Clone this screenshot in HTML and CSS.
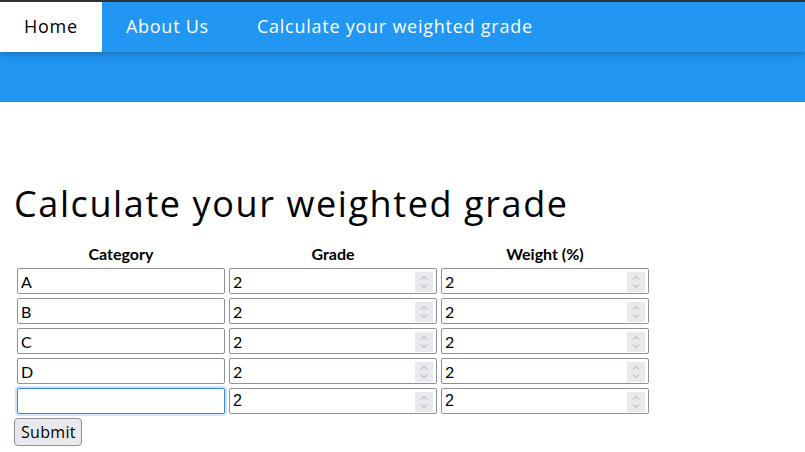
FILE: index.html
```html
<!DOCTYPE html>
<html lang="en">
<head>
<meta charset="utf-8">
<title>Weighted grade calculator</title>
<link rel="stylesheet" href="styles.css">
</head>
<body>
<div class="topline"></div>
<nav class="bar">
  <a class="bar-item active" href="#">Home</a>
  <a class="bar-item" href="#">About Us</a>
  <a class="bar-item" href="#">Calculate your weighted grade</a>
</nav>
<div class="band"></div>
<main class="content">
  <h1 class="title">Calculate your weighted grade</h1>
  <form class="grade-form">
    <table class="grade-table">
      <thead>
        <tr><th>Category</th><th>Grade</th><th>Weight (%)</th></tr>
      </thead>
      <tbody>
        <tr>
          <td><input class="field" type="text" value="A"></td>
          <td><span class="num"><input class="field" type="number" value="2"><span class="spin"><svg width="18" height="20" viewBox="0 0 18 20"><rect width="18" height="20" fill="#e9e9ed"/><path d="M6 7.5L9 4.5L12 7.5M6 12.5L9 15.5L12 12.5" fill="none" stroke="#a4a4ad" stroke-width="1"/></svg></span></span></td>
          <td><span class="num"><input class="field" type="number" value="2"><span class="spin"><svg width="18" height="20" viewBox="0 0 18 20"><rect width="18" height="20" fill="#e9e9ed"/><path d="M6 7.5L9 4.5L12 7.5M6 12.5L9 15.5L12 12.5" fill="none" stroke="#a4a4ad" stroke-width="1"/></svg></span></span></td>
        </tr>
        <tr>
          <td><input class="field" type="text" value="B"></td>
          <td><span class="num"><input class="field" type="number" value="2"><span class="spin"><svg width="18" height="20" viewBox="0 0 18 20"><rect width="18" height="20" fill="#e9e9ed"/><path d="M6 7.5L9 4.5L12 7.5M6 12.5L9 15.5L12 12.5" fill="none" stroke="#a4a4ad" stroke-width="1"/></svg></span></span></td>
          <td><span class="num"><input class="field" type="number" value="2"><span class="spin"><svg width="18" height="20" viewBox="0 0 18 20"><rect width="18" height="20" fill="#e9e9ed"/><path d="M6 7.5L9 4.5L12 7.5M6 12.5L9 15.5L12 12.5" fill="none" stroke="#a4a4ad" stroke-width="1"/></svg></span></span></td>
        </tr>
        <tr>
          <td><input class="field" type="text" value="C"></td>
          <td><span class="num"><input class="field" type="number" value="2"><span class="spin"><svg width="18" height="20" viewBox="0 0 18 20"><rect width="18" height="20" fill="#e9e9ed"/><path d="M6 7.5L9 4.5L12 7.5M6 12.5L9 15.5L12 12.5" fill="none" stroke="#a4a4ad" stroke-width="1"/></svg></span></span></td>
          <td><span class="num"><input class="field" type="number" value="2"><span class="spin"><svg width="18" height="20" viewBox="0 0 18 20"><rect width="18" height="20" fill="#e9e9ed"/><path d="M6 7.5L9 4.5L12 7.5M6 12.5L9 15.5L12 12.5" fill="none" stroke="#a4a4ad" stroke-width="1"/></svg></span></span></td>
        </tr>
        <tr>
          <td><input class="field" type="text" value="D"></td>
          <td><span class="num"><input class="field" type="number" value="2"><span class="spin"><svg width="18" height="20" viewBox="0 0 18 20"><rect width="18" height="20" fill="#e9e9ed"/><path d="M6 7.5L9 4.5L12 7.5M6 12.5L9 15.5L12 12.5" fill="none" stroke="#a4a4ad" stroke-width="1"/></svg></span></span></td>
          <td><span class="num"><input class="field" type="number" value="2"><span class="spin"><svg width="18" height="20" viewBox="0 0 18 20"><rect width="18" height="20" fill="#e9e9ed"/><path d="M6 7.5L9 4.5L12 7.5M6 12.5L9 15.5L12 12.5" fill="none" stroke="#a4a4ad" stroke-width="1"/></svg></span></span></td>
        </tr>
        <tr>
          <td><input class="field focused" type="text" value="" autofocus></td>
          <td><span class="num"><input class="field plain" type="number" value="2"><span class="spin"><svg width="18" height="20" viewBox="0 0 18 20"><rect width="18" height="20" fill="#e9e9ed"/><path d="M6 7.5L9 4.5L12 7.5M6 12.5L9 15.5L12 12.5" fill="none" stroke="#a4a4ad" stroke-width="1"/></svg></span></span></td>
          <td><span class="num"><input class="field plain" type="number" value="2"><span class="spin"><svg width="18" height="20" viewBox="0 0 18 20"><rect width="18" height="20" fill="#e9e9ed"/><path d="M6 7.5L9 4.5L12 7.5M6 12.5L9 15.5L12 12.5" fill="none" stroke="#a4a4ad" stroke-width="1"/></svg></span></span></td>
        </tr>
      </tbody>
    </table>
    <button class="submit" type="button">Submit</button>
  </form>
</main>
</body>
</html>
```
FILE: styles.css
```css
html, body {
  margin: 0;
  padding: 0;
  background: #fff;
  color: #000;
  font-family: "Open Sans", sans-serif;
}

.topline {
  height: 2px;
  background: #34343a;
}

.bar {
  display: flex;
  background: #2196f3;
  position: relative;
  z-index: 1;
  box-shadow: 0 2px 5px 0 rgba(0,0,0,0.16), 0 2px 10px 0 rgba(0,0,0,0.12);
}

.bar-item {
  display: block;
  padding: 11px 24px 12px;
  font-family: "Open Sans", sans-serif;
  font-size: 18px;
  line-height: 27px;
  letter-spacing: 0.75px;
  color: #fff;
  text-decoration: none;
  white-space: nowrap;
}

.bar-item.active {
  background: #fff;
  color: #000;
}

.band {
  height: 50px;
  background: #2196f3;
}

.content {
  padding: 65px 14px 0;
}

.title {
  margin: 10px 0 11px 0;
  font-family: "Open Sans", sans-serif;
  font-weight: 400;
  font-size: 36px;
  line-height: 54px;
  letter-spacing: 1.6px;
}

.grade-form {
  margin: 0;
}

.grade-table {
  border-collapse: separate;
  border-spacing: 2px;
}

.grade-table th {
  padding: 0 1px 2px;
  font-family: Lato, sans-serif;
  font-weight: 700;
  font-size: 16px;
  line-height: 19px;
  text-align: center;
}

.grade-table td {
  padding: 1px;
}

.num {
  display: block;
  position: relative;
}

.spin {
  position: absolute;
  top: 4px;
  right: 4px;
  display: block;
  width: 18px;
  height: 20px;
  pointer-events: none;
}

.spin svg {
  display: block;
}

.field {
  display: block;
  box-sizing: border-box;
  width: 208px;
  height: 26px;
  margin: 0;
  padding: 1px 3px;
  border: 1px solid #8f8f9d;
  border-radius: 2px;
  font-family: Lato, sans-serif;
  font-size: 16px;
  color: #000;
  background: #fff;
  outline: none;
  -moz-appearance: textfield;
}

.field::-webkit-inner-spin-button,
.field::-webkit-outer-spin-button {
  -webkit-appearance: none;
  margin: 0;
}

.field.plain {
  font-family: "Liberation Sans", Arial, sans-serif;
}

.field.focused {
  border-color: #3d86dc;
  box-shadow: 0 0 0 2px #cfe5fb;
  caret-color: #000;
}

.submit {
  display: block;
  box-sizing: border-box;
  height: 28px;
  margin: 1px 0 0;
  padding: 0 5px 0 6px;
  font-family: "Open Sans", sans-serif;
  font-size: 16px;
  letter-spacing: 0.3px;
  color: #000;
  background: #e9e9ed;
  border: 1px solid #8f8f9d;
  border-radius: 4px;
}
```
